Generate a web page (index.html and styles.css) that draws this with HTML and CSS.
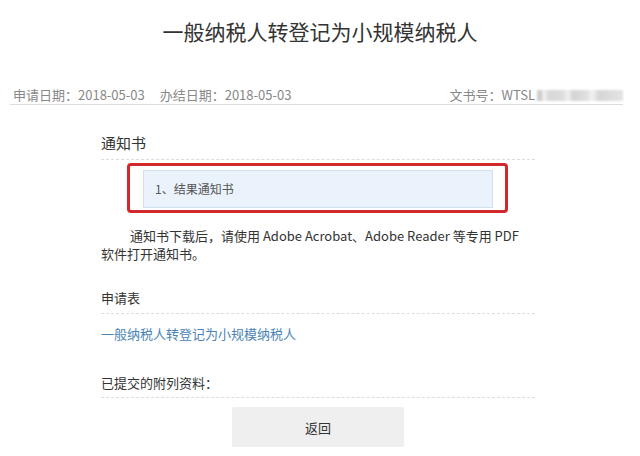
FILE: index.html
```html
<!DOCTYPE html>
<html lang="zh-CN">
<head>
  <meta charset="UTF-8">
  <meta name="viewport" content="width=device-width, initial-scale=1.0">
  <title>一般纳税人转登记为小规模纳税人</title>
  <link rel="stylesheet" href="styles.css">
</head>
<body>

<h1 class="page-title">一般纳税人转登记为小规模纳税人</h1>

<div class="info-bar">
  <div class="dates">
    <span>申请日期：2018-05-03</span>
    <span class="gap">办结日期：2018-05-03</span>
  </div>
  <div class="doc-no">文书号：WTSL<span class="masked"></span></div>
</div>

<div class="content">
  <div class="section-head big">通知书</div>
  <div class="highlight">
    <div class="notice-item">1、结果通知书</div>
  </div>
  <p class="tip">通知书下载后，请使用 Adobe Acrobat、Adobe Reader 等专用 PDF<br>软件打开通知书。</p>

  <div class="section-head apply">申请表</div>
  <a class="form-link" href="#">一般纳税人转登记为小规模纳税人</a>

  <div class="section-head attach">已提交的附列资料：</div>

  <div class="actions">
    <button class="btn-back">返回</button>
  </div>
</div>

</body>
</html>
```

FILE: styles.css
```css
body {
  margin: 0;
  background: #fff;
  font-family: "Microsoft YaHei", "Noto Sans CJK SC", sans-serif;
  color: #333;
}
.page-title {
  margin: 0;
  padding-top: 17px;
  height: 28px;
  line-height: 28px;
  font-size: 21px;
  font-weight: normal;
  text-align: center;
  color: #333;
}
.info-bar {
  display: flex;
  justify-content: space-between;
  margin: 41px 17px 0 10px;
  padding: 0 0 0 3px;
  height: 18px;
  line-height: 18px;
  font-size: 13px;
  color: #888;
  border-bottom: 1px solid #ddd;
}
.dates .gap {
  margin-left: 12px;
}
.doc-no {
  display: flex;
  align-items: center;
}
.masked {
  display: inline-block;
  width: 86px;
  height: 11px;
  margin-left: 2px;
  background: linear-gradient(90deg, #cfcfcf 0%, #cfcfcf 5%, #f4f4f4 8%, #d8d8d8 14%, #dcdcdc 30%, #f2f2f2 36%, #d4d4d4 42%, #e0e0e0 58%, #f3f3f3 64%, #d6d6d6 72%, #e4e4e4 100%);
  filter: blur(1px);
}
.content {
  width: 434px;
  margin-left: 101px;
}
.section-head {
  height: 20px;
  line-height: 20px;
  font-size: 13px;
  color: #333;
  border-bottom: 1px dashed #ddd;
}
.section-head.big {
  margin-top: 28px;
  padding-bottom: 6px;
  font-size: 15px;
}
.highlight {
  margin: 3px 0 0 26px;
  width: 350px;
  padding: 4px 12px 2px 13px;
  border: 3px solid #d3282b;
  border-radius: 4px;
}
.notice-item {
  height: 36px;
  line-height: 36px;
  padding-left: 11px;
  font-size: 12px;
  color: #555;
  background: #eaf3fb;
  border: 1px solid #cfe0ee;
}
.tip {
  margin: 14px 0 0;
  width: 460px;
  line-height: 18px;
  font-size: 13px;
  text-indent: 29px;
  color: #333;
}
.section-head.apply {
  margin-top: 25px;
  padding-bottom: 5px;
}
.form-link {
  display: block;
  margin-top: 11px;
  line-height: 18px;
  font-size: 13px;
  color: #4a84b6;
  text-decoration: none;
}
.section-head.attach {
  margin-top: 30px;
  padding-bottom: 4px;
}
.actions {
  display: flex;
  justify-content: center;
  margin-top: 9px;
}
.btn-back {
  width: 172px;
  height: 40px;
  border: 0;
  border-radius: 2px;
  background: #efeff0;
  font-family: inherit;
  font-size: 13px;
  color: #333;
}
```
